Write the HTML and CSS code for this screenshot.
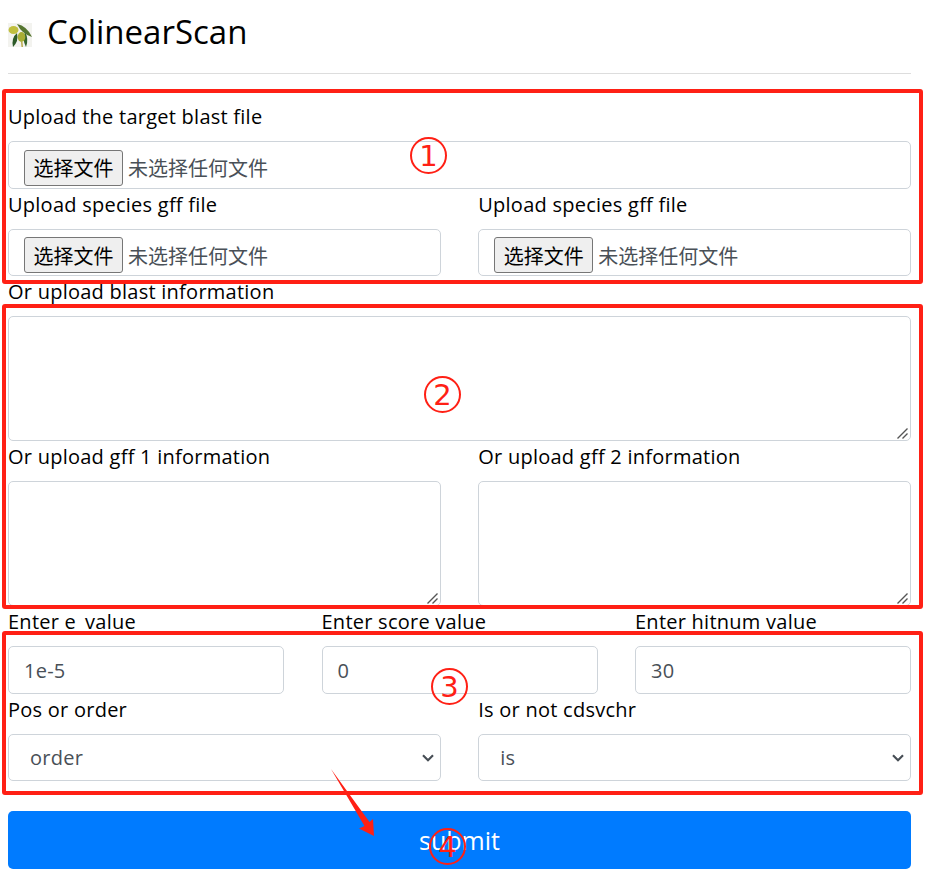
FILE: index.html
```html
<!DOCTYPE html>
<html>
<head>
  <title>ColinearScan</title>
  <link rel="stylesheet" href="styles.css">
</head>
<body>
  <div class="container">
    <div class="page-header">
      <svg class="logo" width="24" height="24" viewBox="0 0 24 24">
        <rect width="24" height="24" fill="#f3f3ef"/>
        <path d="M9 1 Q19 3 24 14 Q14 11 9 1 Z" fill="#55752f"/>
        <path d="M9 10 Q3 15 5 24 Q11 18 9 10 Z" fill="#2c5a28"/>
        <path d="M17 9 Q21 16 18 24 Q14 17 17 9 Z" fill="#35642c"/>
        <ellipse cx="5.5" cy="7" rx="5" ry="4" fill="#c0bf3e"/>
        <ellipse cx="13.5" cy="14" rx="3.8" ry="5" fill="#a8ad34"/>
        <path d="M13 19 L13.5 24 L15 24 L14.5 19 Z" fill="#b9a84a"/>
      </svg>
      <h1>ColinearScan</h1>
    </div>
    <hr class="divider">

    <form class="scan-form">
      <div class="field">
        <label class="label">Upload the target blast file</label>
        <div class="file-field"><button type="button" class="file-button">选择文件</button><span class="file-name">未选择任何文件</span></div>
      </div>

      <div class="row two">
        <div class="field">
          <label class="label">Upload species gff file</label>
          <div class="file-field"><button type="button" class="file-button">选择文件</button><span class="file-name">未选择任何文件</span></div>
        </div>
        <div class="field">
          <label class="label">Upload species gff file</label>
          <div class="file-field"><button type="button" class="file-button">选择文件</button><span class="file-name">未选择任何文件</span></div>
        </div>
      </div>

      <div class="field">
        <label class="label">Or upload blast information</label>
        <div class="text-wrap">
          <textarea class="text-field"></textarea>
          <svg class="grip" width="11" height="11" viewBox="0 0 11 11"><path d="M0.5 10.5 L10.5 0.5 M5.5 10.5 L10.5 5.5" stroke="#555555" stroke-width="1.4"/></svg>
        </div>
      </div>

      <div class="row two">
        <div class="field">
          <label class="label">Or upload gff 1 information</label>
          <div class="text-wrap">
            <textarea class="text-field"></textarea>
            <svg class="grip" width="11" height="11" viewBox="0 0 11 11"><path d="M0.5 10.5 L10.5 0.5 M5.5 10.5 L10.5 5.5" stroke="#555555" stroke-width="1.4"/></svg>
          </div>
        </div>
        <div class="field">
          <label class="label">Or upload gff 2 information</label>
          <div class="text-wrap">
            <textarea class="text-field"></textarea>
            <svg class="grip" width="11" height="11" viewBox="0 0 11 11"><path d="M0.5 10.5 L10.5 0.5 M5.5 10.5 L10.5 5.5" stroke="#555555" stroke-width="1.4"/></svg>
          </div>
        </div>
      </div>

      <div class="row three">
        <div class="field">
          <label class="label">Enter e_value</label>
          <input type="text" class="input-field" value="1e-5">
        </div>
        <div class="field">
          <label class="label">Enter score value</label>
          <input type="text" class="input-field" value="0">
        </div>
        <div class="field">
          <label class="label">Enter hitnum value</label>
          <input type="text" class="input-field" value="30">
        </div>
      </div>

      <div class="row two">
        <div class="field">
          <label class="label">Pos or order</label>
          <select class="select-field"><option>order</option></select>
        </div>
        <div class="field">
          <label class="label">Is or not cdsvchr</label>
          <select class="select-field"><option>is</option></select>
        </div>
      </div>

      <button type="button" class="submit-button">submit</button>
    </form>
  </div>

  <!-- red annotations drawn over the form -->
  <div class="mark box-one"></div>
  <div class="mark box-two"></div>
  <div class="mark box-three"></div>
  <span class="num num-one">1</span>
  <span class="num num-two">2</span>
  <span class="num num-three">3</span>
  <span class="num num-four">4</span>
  <svg class="arrow" width="70" height="85" viewBox="0 0 70 85">
    <path d="M11 9 L44.5 66 L39 68.500 L54 76 L53 59 L49.500 62 Z" fill="#ff2015"/>
  </svg>
</body>
</html>
```

FILE: styles.css
```css
body {
  font-family: "Open Sans", "Noto Sans CJK SC", sans-serif;
  font-size: 20px;
  color: #212529;
  background-color: #ffffff;
  margin: 0;
}

.container {
  width: 903px;
  padding: 0 8px;
}

.page-header {
  display: flex;
  align-items: center;
  gap: 15px;
  height: 63px;
}

.logo {
  margin-top: 7px;
}

h1 {
  font-size: 33px;
  font-weight: 400;
  color: #000000;
  margin: 0;
}

.divider {
  border: none;
  border-top: 1px solid #dddddd;
  margin: 10px 0 27px;
}

.row {
  display: grid;
  gap: 0 37.5px;
}

.two {
  grid-template-columns: 1fr 1fr;
}

.three {
  grid-template-columns: 1fr 1fr 1fr;
}

.label {
  display: block;
  line-height: 32px;
  margin-bottom: 8px;
  letter-spacing: 0.25px;
  color: #000000;
}

.file-field {
  display: flex;
  align-items: center;
  box-sizing: border-box;
  height: 47.5px;
  padding: 6px 15px 0;
  border: 1px solid #ced4da;
  border-radius: 5px;
  color: #495057;
}

.file-button {
  height: 36px;
  width: 99px;
  padding: 0;
  margin-right: 5px;
  font-family: "Noto Sans CJK SC", sans-serif;
  font-size: 20px;
  color: #000000;
  background-color: #efefef;
  border: 1px solid #767676;
  border-radius: 3px;
}

.file-name {
  font-family: "Noto Sans CJK SC", sans-serif;
}

.text-wrap {
  position: relative;
}

.text-field {
  display: block;
  box-sizing: border-box;
  width: 100%;
  height: 125px;
  border: 1px solid #ced4da;
  border-radius: 5px;
  resize: none;
}

.grip {
  position: absolute;
  right: 3px;
  bottom: 2px;
}

.input-field,
.select-field {
  display: block;
  box-sizing: border-box;
  width: 100%;
  font-family: "Open Sans", sans-serif;
  font-size: 20px;
  letter-spacing: 0.25px;
  color: #495057;
  background-color: #ffffff;
  border: 1px solid #ced4da;
  border-radius: 5px;
}

.input-field {
  height: 48px;
  padding: 0 15px;
}

.select-field {
  height: 47px;
  padding: 0 21px;
  appearance: none;
  background-image: url("data:image/svg+xml,%3Csvg xmlns='http://www.w3.org/2000/svg' width='12' height='8' viewBox='0 0 12 8'%3E%3Cpath d='M1 1.200 L6 6.200 L11 1.200' fill='none' stroke='%23495057' stroke-width='2.200'/%3E%3C/svg%3E");
  background-repeat: no-repeat;
  background-position: right 6px center;
}

.submit-button {
  display: block;
  width: 100%;
  height: 58px;
  margin-top: 30px;
  font-family: "Open Sans", sans-serif;
  font-size: 25px;
  color: #ffffff;
  background-color: #007bff;
  border: none;
  border-radius: 5px;
}

.mark {
  position: absolute;
  left: 2px;
  width: 921px;
  box-sizing: border-box;
  border: 4px solid #ff2015;
  border-radius: 3px;
}

.box-one {
  top: 89px;
  height: 195px;
}

.box-two {
  top: 304px;
  height: 305px;
}

.box-three {
  top: 631px;
  height: 164px;
}

.num {
  position: absolute;
  display: flex;
  align-items: center;
  justify-content: center;
  box-sizing: border-box;
  width: 37px;
  height: 37px;
  border: 2px solid #ff2015;
  border-radius: 50%;
  font-family: "DejaVu Sans", sans-serif;
  font-size: 29px;
  color: #ff2015;
}

.num-one {
  left: 410px;
  top: 137px;
}

.num-two {
  left: 424px;
  top: 376px;
}

.num-three {
  left: 431px;
  top: 668px;
}

.num-four {
  left: 429px;
  top: 828px;
}

.arrow {
  position: absolute;
  left: 320px;
  top: 760px;
}
```
